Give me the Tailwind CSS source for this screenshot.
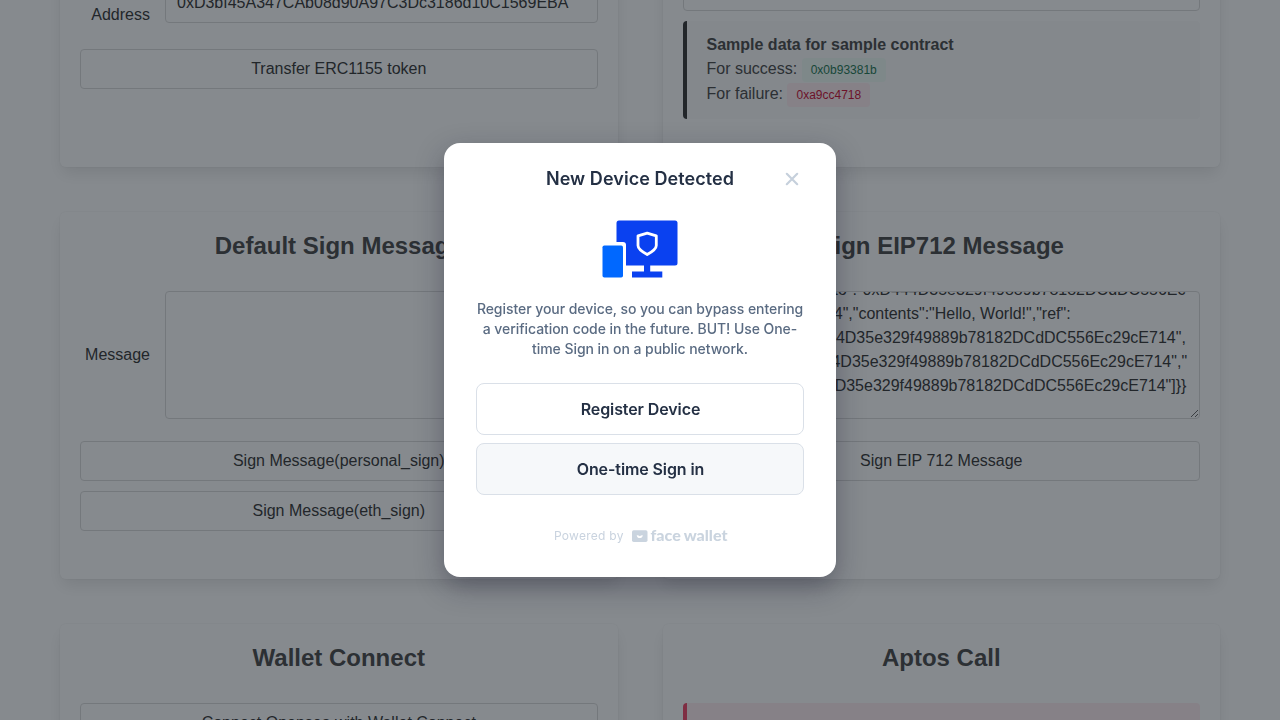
<!DOCTYPE html>
<html lang="en">
<head>
<meta charset="utf-8">
<title>Face Wallet</title>
<script src="https://cdn.jsdelivr.net/npm/@tailwindcss/browser@4"></script>
</head>
<body class="h-screen overflow-hidden bg-white font-['Liberation_Sans',Arial,sans-serif] text-base leading-6 text-[#4a4a4a]">
<main class="-mt-[100px] grid h-[820px] grid-cols-2 content-start gap-[45px] overflow-hidden px-[60px]">
  <section class="flex h-[267px] flex-col justify-end rounded-md bg-white px-5 pb-[78px] shadow-[0_8px_16px_-2px_rgba(10,10,10,0.1),0_0_0_1px_rgba(10,10,10,0.02)]">
    <div class="mb-[26px] flex items-end gap-[15px]">
      <div class="-mb-1 w-[70px] text-right text-[#363636]">Wallet<br>Address</div>
      <div class="h-10 flex-1 rounded border border-[#dbdbdb] px-[11px] pt-[7px] text-[#363636]">0xD3bf45A347CAb08d90A97C3Dc3186d10C1569EBA</div>
    </div>
    <button class="h-10 rounded border border-[#dbdbdb] text-[#363636]">Transfer ERC1155 token</button>
  </section>

  <section class="flex h-[267px] flex-col justify-end rounded-md bg-white px-5 pb-12 shadow-[0_8px_16px_-2px_rgba(10,10,10,0.1),0_0_0_1px_rgba(10,10,10,0.02)]">
    <div class="mb-2.5 h-10 rounded border border-[#dbdbdb]"></div>
    <div class="h-[98px] rounded border-l-4 border-[#363636] bg-[#fafafa] px-5 py-3">
      <strong class="block h-6">Sample data for sample contract</strong>
      <div class="flex h-[25px] gap-[4.500px]">For success: <span class="mt-px h-6 rounded bg-[#effaf5] px-[9px] text-xs leading-6 text-[#257953]">0x0b93381b</span></div>
      <div class="flex h-[25px] gap-[4.500px]">For failure: <span class="mt-px h-6 rounded bg-[#feecf0] px-[9px] text-xs leading-6 text-[#cc0f35]">0xa9cc4718</span></div>
    </div>
  </section>

  <section class="flex h-[367px] flex-col rounded-md bg-white p-5 shadow-[0_8px_16px_-2px_rgba(10,10,10,0.1),0_0_0_1px_rgba(10,10,10,0.02)]">
    <h2 class="mb-8 text-center text-2xl leading-[27px] font-bold text-[#4a4a4a]">Default Sign Message</h2>
    <div class="mb-[22px] flex items-center gap-[15px]">
      <div class="w-[70px] text-right text-[#363636]">Message</div>
      <div class="h-32 flex-1 resize overflow-hidden rounded border border-[#dbdbdb]"></div>
    </div>
    <button class="mb-2.5 h-10 rounded border border-[#dbdbdb] text-[#363636]">Sign Message(personal_sign)</button>
    <button class="h-10 rounded border border-[#dbdbdb] text-[#363636]">Sign Message(eth_sign)</button>
  </section>

  <section class="flex h-[367px] flex-col rounded-md bg-white p-5 shadow-[0_8px_16px_-2px_rgba(10,10,10,0.1),0_0_0_1px_rgba(10,10,10,0.02)]">
    <h2 class="mb-8 text-center text-2xl leading-[27px] font-bold text-[#4a4a4a]">Sign EIP712 Message</h2>
    <div class="mb-[22px] flex items-center gap-[15px]">
      <div class="w-[70px] text-right text-[#363636]">Message</div>
      <div class="h-32 min-w-0 flex-1 resize overflow-hidden rounded border border-[#dbdbdb] pl-[11px] text-[#363636]">
        <div class="-mt-[14px] w-[406px] text-right whitespace-nowrap">"to":"0xD444D35e329f49889b78182DCdDC556Ec</div>
        <div class="whitespace-nowrap">29cE714","contents":"Hello, World!","ref":</div>
        <div class="whitespace-nowrap">["0xD444D35e329f49889b78182DCdDC556Ec29cE714",</div>
        <div class="whitespace-nowrap">"0xD444D35e329f49889b78182DCdDC556Ec29cE714","</div>
        <div class="whitespace-nowrap">0xD444D35e329f49889b78182DCdDC556Ec29cE714"]}}</div>
      </div>
    </div>
    <button class="h-10 rounded border border-[#dbdbdb] text-[#363636]">Sign EIP 712 Message</button>
  </section>

  <section class="flex h-[367px] flex-col rounded-md bg-white p-5 shadow-[0_8px_16px_-2px_rgba(10,10,10,0.1),0_0_0_1px_rgba(10,10,10,0.02)]">
    <h2 class="mb-8 text-center text-2xl leading-[27px] font-bold text-[#4a4a4a]">Wallet Connect</h2>
    <button class="h-10 rounded border border-[#dbdbdb] text-[#363636]">Connect Opensea with Wallet Connect</button>
  </section>

  <section class="flex h-[367px] flex-col rounded-md bg-white p-5 shadow-[0_8px_16px_-2px_rgba(10,10,10,0.1),0_0_0_1px_rgba(10,10,10,0.02)]">
    <h2 class="mb-8 text-center text-2xl leading-[27px] font-bold text-[#4a4a4a]">Aptos Call</h2>
    <div class="h-20 rounded border-l-4 border-[#f14668] bg-[#feecf0]"></div>
  </section>
</main>

<div class="fixed inset-0 flex items-center justify-center bg-[#0d151d]/50">
  <div class="relative flex h-[434px] w-[392px] flex-col items-center rounded-2xl bg-white px-8 font-[Inter,sans-serif] shadow-[0_10px_28px_rgba(22,22,45,0.36)]">
    <h1 class="mt-[23px] text-[18px] leading-[26px] font-semibold tracking-[0.06px] text-[#243044]">New Device Detected</h1>
    <svg class="absolute top-6 right-8 size-6" viewBox="0 0 24 24" fill="none" stroke="#c6d0dc" stroke-width="2.2" stroke-linecap="round"><path d="M6.8 6.8 17.2 17.2M17.2 6.8 6.8 17.2"/></svg>
    <svg class="mt-[27px] h-[60px] w-20 shrink-0" viewBox="600 219 80 60">
      <rect x="616.5" y="220.5" width="61" height="45" rx="2.5" fill="#0a41f0"/>
      <path d="M644 265h6.2v6.5H662.3v6H632v-6h12z" fill="#0a41f0"/>
      <path d="M599 242h24a3 3 0 0 1 3 3v35h-27z" fill="#fff"/>
      <rect x="602.5" y="245.5" width="20.500" height="32" rx="1.800" fill="#0068ff"/>
      <path d="M647.2 233.200 656.300 235.800V245.500C656.300 249.300 651.500 252.200 647.200 254.500 642.900 252.200 638 249.300 638 245.500V235.800Z" fill="none" stroke="#fff" stroke-width="2.800" stroke-linejoin="round"/>
    </svg>
    <p class="mt-5 text-center text-sm leading-5 font-medium tracking-[-0.06px] whitespace-nowrap text-[#5a6b82]">Register your device, so you can bypass entering<br>a verification code in the future. BUT! Use One-<br>time Sign in on a public network.</p>
    <button class="mt-6 h-[52px] w-full shrink-0 rounded-lg border border-[#dae0e8] pl-px font-semibold tracking-[-0.1px] text-[#243044]">Register Device</button>
    <button class="mt-2 h-[52px] w-full shrink-0 rounded-lg border border-[#dae0e8] bg-[#f6f8fa] pl-px font-semibold tracking-[-0.1px] text-[#243044]">One-time Sign in</button>
    <div class="mt-8 ml-0.5 flex h-[18px] w-[174px] items-center justify-between text-xs tracking-[0.27px] text-[#c9d3df]">
      <span>Powered by</span>
      <svg class="h-[18px] w-24" viewBox="0 0 96 18" fill="#cad4df">
        <rect y="3.300" width="15.500" height="11.700" rx="1.700"/>
        <path d="M4.700 8.200Q6.300 7.900 7.750 9.200 9.200 7.900 10.800 8.200C10.500 12 5 12 4.700 8.200Z" fill="#fff"/>
        <text x="18.500" y="14.300" font-family="Lato" font-weight="900" font-size="15" letter-spacing="0" word-spacing="-0.5" textLength="77" lengthAdjust="spacingAndGlyphs">face wallet</text>
      </svg>
    </div>
  </div>
</div>
</body>
</html>
